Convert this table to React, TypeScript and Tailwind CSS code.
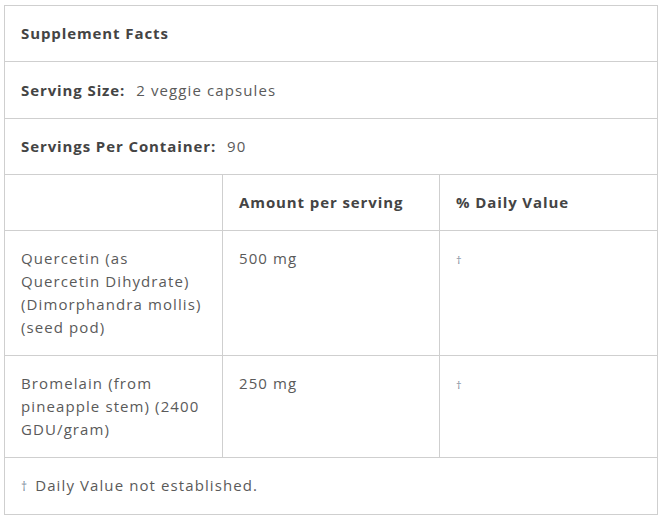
import React from "react";

const cell = "border border-[#cfcfcf] px-4 pt-4 pb-4 align-top";
const bold = "font-bold text-[#444] tracking-[0.9px]";

export default function App() {
  return (
    <div className="bg-white min-h-[521px] pt-[5px] pl-[4px] pr-[10px]" style={{ fontFamily: '"Open Sans", "Noto Sans", sans-serif' }}>
      <table className="w-[653px] border-collapse border border-[#cfcfcf] text-[15px] leading-[23px] text-[#5a5a5a] tracking-[1.1px] table-fixed">
        <colgroup>
          <col className="w-[218px]" />
          <col className="w-[217px]" />
          <col className="w-[218px]" />
        </colgroup>
        <tbody>
          <tr>
            <td colSpan={3} className={cell + " " + bold}>Supplement Facts</td>
          </tr>
          <tr>
            <td colSpan={3} className={cell + " pt-[17px]"}>
              <span className={bold + " mr-[6px]"}>Serving Size:</span> 2 veggie capsules
            </td>
          </tr>
          <tr>
            <td colSpan={3} className={cell}>
              <span className={bold + " mr-[6px]"}>Servings Per Container:</span> 90
            </td>
          </tr>
          <tr>
            <td className={cell}>&nbsp;</td>
            <td className={cell + " " + bold}>Amount per serving</td>
            <td className={cell + " " + bold}>% Daily Value</td>
          </tr>
          <tr>
            <td className={cell}>Quercetin (as Quercetin Dihydrate) (Dimorphandra mollis) (seed pod)</td>
            <td className={cell}>500 mg</td>
            <td className={cell}><span className="text-[11px] text-[#7a8a9a]">†</span></td>
          </tr>
          <tr>
            <td className={cell}>Bromelain (from pineapple stem) (2400 GDU/gram)</td>
            <td className={cell}>250 mg</td>
            <td className={cell}><span className="text-[11px] text-[#7a8a9a]">†</span></td>
          </tr>
          <tr>
            <td colSpan={3} className={cell}>
              <span className="text-[12px] text-[#7a8a9a] mr-[2px]">†</span> Daily Value not established.
            </td>
          </tr>
        </tbody>
      </table>
    </div>
  );
}
